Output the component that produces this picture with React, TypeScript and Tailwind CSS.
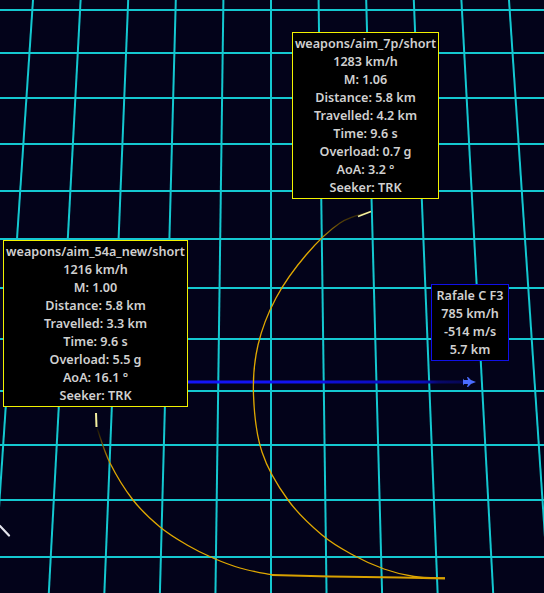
import React from "react";

// Perspective grid parameters (vanishing point far above the view)
const CX = 271;
const STEP = 47.6;
const VP = 3552;
const ROWS = [10, 53, 98, 144, 191, 239, 288, 339, 391, 445, 500, 557];
const COLS = [-6, -5, -4, -3, -2, -1, 0, 1, 2, 3, 4, 5, 6];

const colX = (k: number, y: number) => CX + k * STEP * (1 + y / VP);

// Catmull-Rom -> cubic bezier path
const smooth = (pts: [number, number][]) => {
  let d = `M${pts[0][0]},${pts[0][1]}`;
  for (let i = 0; i < pts.length - 1; i++) {
    const p0 = pts[i - 1] || pts[i];
    const p1 = pts[i];
    const p2 = pts[i + 1];
    const p3 = pts[i + 2] || p2;
    const c1x = p1[0] + (p2[0] - p0[0]) / 6;
    const c1y = p1[1] + (p2[1] - p0[1]) / 6;
    const c2x = p2[0] - (p3[0] - p1[0]) / 6;
    const c2y = p2[1] - (p3[1] - p1[1]) / 6;
    d += ` C${c1x},${c1y} ${c2x},${c2y} ${p2[0]},${p2[1]}`;
  }
  return d;
};

// missile trails, head first
const trail7p: [number, number][] = [
  [371, 211.5], [340, 223], [306, 255], [276, 298], [258, 345], [253.5, 395],
  [262, 452], [288, 500], [322, 535], [353, 555], [384, 569], [414, 576.5],
  [445, 578],
];
const trail54: [number, number][] = [
  [97, 428], [110, 463], [133, 500], [160, 527], [187, 545], [213, 558],
  [240, 568], [272, 575],
];

const Tag = ({ className, lines }: { className: string; lines: string[] }) => (
  <div
    className={`absolute flex flex-col items-center bg-black py-[2px] text-[12.6px] leading-[18px] font-semibold text-[#d0d0d0] whitespace-nowrap ${className}`}
    style={{ fontFamily: '"Noto Sans", "Open Sans", sans-serif' }}
  >
    {lines.map((l) => (
      <span key={l}>{l}</span>
    ))}
  </div>
);

export default function App() {
  return (
    <div className="relative w-[544px] h-[593px] overflow-hidden bg-[#03031a]">
      <svg className="absolute inset-0" width={544} height={593} viewBox="0 0 544 593">
        <defs>
          <linearGradient id="g7" gradientUnits="userSpaceOnUse" x1="370" y1="212" x2="318" y2="242">
            <stop offset="0" stopColor="#1a1408" />
            <stop offset="0.55" stopColor="#5a4408" />
            <stop offset="1" stopColor="#e0a800" />
          </linearGradient>
          <linearGradient id="g54" gradientUnits="userSpaceOnUse" x1="97" y1="428" x2="112" y2="468">
            <stop offset="0" stopColor="#141008" />
            <stop offset="1" stopColor="#e0a800" />
          </linearGradient>
          <linearGradient id="gb" gradientUnits="userSpaceOnUse" x1="188" y1="0" x2="466" y2="0">
            <stop offset="0" stopColor="#1414f8" />
            <stop offset="0.48" stopColor="#1212f0" />
            <stop offset="0.5" stopColor="#0e0ed4" />
            <stop offset="0.85" stopColor="#0b0bb8" />
            <stop offset="0.9" stopColor="#08086a" />
            <stop offset="1" stopColor="#060650" />
          </linearGradient>
        </defs>

        {/* grid */}
        <g stroke="#14c8d0" strokeWidth={2}>
          {ROWS.map((y) => (
            <line key={`r${y}`} x1={0} y1={y} x2={544} y2={y} />
          ))}
          {COLS.map((k) => (
            <line key={`c${k}`} x1={colX(k, 0)} y1={0} x2={colX(k, 593)} y2={593} />
          ))}
        </g>

        {/* aircraft track */}
        <rect x={188} y={380.5} width={278} height={3} fill="url(#gb)" />
        <polygon
          fill="#4a6cff"
          points="476,382 471,380 468,377 467,377 468,380 464,380 463,378.5 463,385.5 464,384 468,384 467,387 468,387 471,384"
        />

        {/* missile trails */}
        <path d={smooth(trail7p)} fill="none" stroke="url(#g7)" strokeWidth={1.3} />
        <path d={smooth(trail54)} fill="none" stroke="url(#g54)" strokeWidth={1.3} />
        <path d="M272,575 L330,576.5 L400,577.5 L445,578.5" fill="none" stroke="#d8a000" strokeWidth={1.8} />

        {/* missile heads */}
        <line x1={358} y1={216.5} x2={371} y2={211.5} stroke="#f4f0a0" strokeWidth={1.6} />
        <line x1={96} y1={413} x2={96.5} y2={427} stroke="#f4f0a0" strokeWidth={2} />

        {/* stray marker */}
        <line x1={0} y1={526} x2={9} y2={535.5} stroke="#e4e4ec" strokeWidth={2.2} strokeLinecap="round" />
      </svg>

      <Tag
        className="left-[292px] top-[32px] w-[147px] h-[167px] border border-[#f2f200]"
        lines={[
          "weapons/aim_7p/short",
          "1283 km/h",
          "M: 1.06",
          "Distance: 5.8 km",
          "Travelled: 4.2 km",
          "Time: 9.6 s",
          "Overload: 0.7 g",
          "AoA: 3.2 °",
          "Seeker: TRK",
        ]}
      />
      <Tag
        className="left-[3px] top-[240px] w-[185px] h-[167px] border border-[#f2f200]"
        lines={[
          "weapons/aim_54a_new/short",
          "1216 km/h",
          "M: 1.00",
          "Distance: 5.8 km",
          "Travelled: 3.3 km",
          "Time: 9.6 s",
          "Overload: 5.5 g",
          "AoA: 16.1 °",
          "Seeker: TRK",
        ]}
      />
      <Tag
        className="left-[431px] top-[284px] w-[78px] h-[77px] border border-[#1010e8]"
        lines={["Rafale C F3", "785 km/h", "-514 m/s", "5.7 km"]}
      />
    </div>
  );
}
